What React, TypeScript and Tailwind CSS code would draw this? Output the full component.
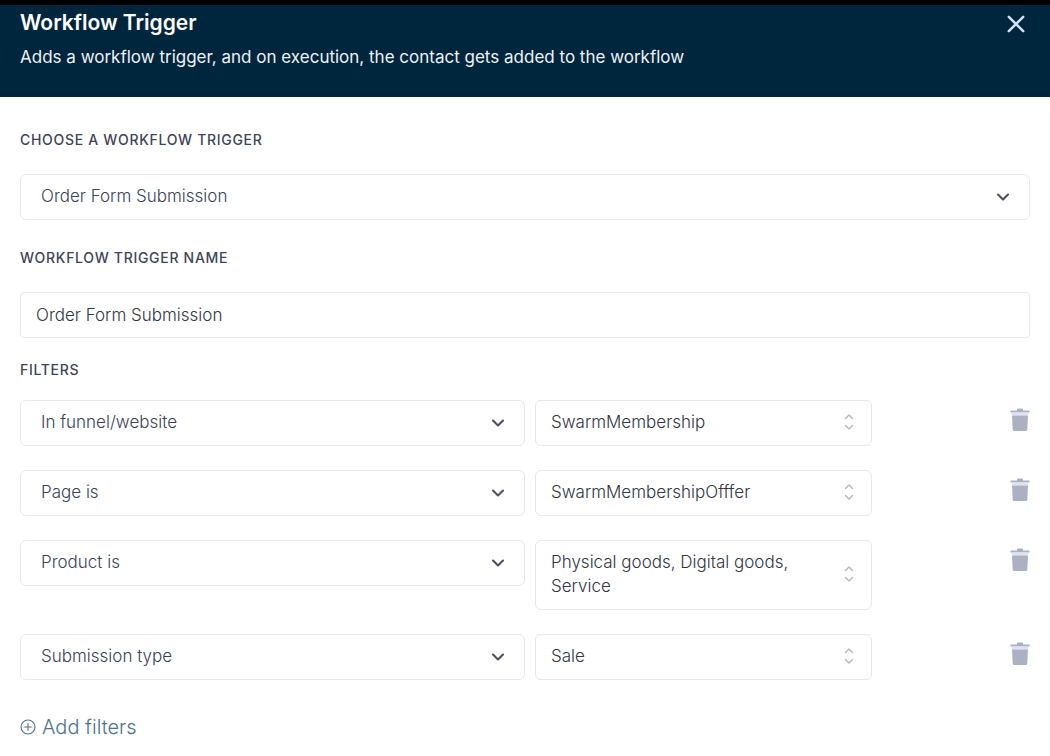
import React, { useState } from "react";

interface Filter {
  id: string;
  field: string;
  value: string;
}

const FIELDS = ["In funnel/website", "Page is", "Product is", "Submission type"];

const TRIGGERS = ["Order Form Submission"];

const INITIAL_FILTERS: Filter[] = [
  { id: "funnel", field: "In funnel/website", value: "SwarmMembership" },
  { id: "page", field: "Page is", value: "SwarmMembershipOfffer" },
  { id: "product", field: "Product is", value: "Physical goods, Digital goods, Service" },
  { id: "type", field: "Submission type", value: "Sale" },
];

function ChevronIcon() {
  return (
    <svg viewBox="0 0 14 10" className="w-3.5 h-2.5" fill="none" stroke="#4b4f5e" strokeWidth="2.1" strokeLinecap="round" strokeLinejoin="round">
      <path d="M2 2.5 7 7.5 12 2.5" />
    </svg>
  );
}

function SelectorIcon() {
  return (
    <svg viewBox="0 0 10 18" className="w-2.5 h-[18px]" fill="none" stroke="#b9babd" strokeWidth="1.5" strokeLinecap="round" strokeLinejoin="round">
      <path d="M1.5 5.5 5 2 8.5 5.5M1.5 12.5 5 16 8.5 12.5" />
    </svg>
  );
}

function TrashIcon() {
  return (
    <svg viewBox="0 0 20 24" className="w-5 h-6">
      <path d="M7 1.5Q7 .5 8 .5H12Q13 .5 13 1.500V2.500H19.500V4.500H.5V2.500H7Z" fill="#abb1c2" />
      <path d="M1.500 4.500H18.500L18.200 7.500H1.800Z" fill="#dfe2f0" />
      <path d="M2 7.500H18L17.300 21.500Q17.200 23 15.700 23H4.300Q2.800 23 2.700 21.500Z" fill="#abb1c2" />
    </svg>
  );
}

interface SelectProps {
  id?: string;
  label?: string;
  value: string;
  options: string[];
  onChange: (value: string) => void;
}

function Select({ id, label, value, options, onChange }: SelectProps) {
  return (
    <div className="grid items-center">
      <select
        id={id}
        aria-label={label}
        value={value}
        onChange={(e) => onChange(e.target.value)}
        className="col-start-1 row-start-1 w-full h-[46px] appearance-none rounded-md border border-[#e8e8ea] bg-white pl-5 pr-10 text-[17px] font-light text-[#3c4257]"
      >
        {options.map((option) => (
          <option key={option}>{option}</option>
        ))}
      </select>
      <span className="col-start-1 row-start-1 justify-self-end pr-5 pointer-events-none">
        <ChevronIcon />
      </span>
    </div>
  );
}

interface FilterRowProps {
  filter: Filter;
  onFieldChange: (field: string) => void;
  onDelete: () => void;
}

function FilterRow({ filter, onFieldChange, onDelete }: FilterRowProps) {
  return (
    <li className="flex items-start gap-2.5">
      <div className="w-1/2">
        <Select label="Filter field" value={filter.field} options={FIELDS} onChange={onFieldChange} />
      </div>
      <button
        type="button"
        aria-haspopup="listbox"
        className="w-1/3 flex items-center justify-between rounded-md border border-[#e8e8ea] pt-[9px] pb-[11px] pl-[15px] pr-[17px] text-left text-[17px] leading-6 font-light text-[#33363f]"
      >
        <span className="max-w-[256px]">{filter.value}</span>
        <SelectorIcon />
      </button>
      <button type="button" onClick={onDelete} aria-label="Delete filter" className="ml-auto mt-2">
        <TrashIcon />
      </button>
    </li>
  );
}

const labelClass = "block text-sm leading-5 font-medium tracking-wider uppercase text-[#3f4458]";

export default function App() {
  const [trigger, setTrigger] = useState(TRIGGERS[0]);
  const [name, setName] = useState("Order Form Submission");
  const [filters, setFilters] = useState(INITIAL_FILTERS);

  const handleFieldChange = (id: string, field: string) => {
    setFilters(filters.map((f) => (f.id === id ? { ...f, field } : f)));
  };

  const handleAdd = () => {
    setFilters([...filters, { id: String(Date.now()), field: FIELDS[0], value: "Select" }]);
  };

  return (
    <div className="min-h-screen bg-white font-['Inter',sans-serif]">
      <header className="flex items-start justify-between border-t-[5px] border-black bg-[#00263e] px-5 pt-1 pb-7">
        <div>
          <h1 className="text-[21px] leading-7 font-semibold text-white">Workflow Trigger</h1>
          <p className="mt-2 text-[17px] leading-6 text-[#eef2f5]">
            Adds a workflow trigger, and on execution, the contact gets added to the workflow
          </p>
        </div>
        <button type="button" aria-label="Close" className="px-1 py-[5px]">
          <svg viewBox="0 0 20 20" className="w-5 h-5" fill="none" stroke="#d3e2f8" strokeWidth="2.5" strokeLinecap="round">
            <path d="M2.800 2.800 17.200 17.200M17.200 2.800 2.800 17.200" />
          </svg>
        </button>
      </header>

      <main className="px-5 pt-[33px] pb-4">
        <label htmlFor="trigger" className={labelClass}>
          Choose a workflow trigger
        </label>
        <div className="mt-6">
          <Select id="trigger" value={trigger} options={TRIGGERS} onChange={setTrigger} />
        </div>

        <label htmlFor="trigger-name" className={`${labelClass} mt-7`}>
          Workflow trigger name
        </label>
        <input
          id="trigger-name"
          type="text"
          value={name}
          onChange={(e) => setName(e.target.value)}
          className="mt-6 block w-full h-[46px] rounded-sm border border-[#e8e8ea] px-[15px] text-[17px] font-light text-[#33363f]"
        />

        <h2 className={`${labelClass} mt-[22px]`}>Filters</h2>
        <ul className="mt-5 flex flex-col gap-6">
          {filters.map((filter) => (
            <FilterRow
              key={filter.id}
              filter={filter}
              onFieldChange={(field) => handleFieldChange(filter.id, field)}
              onDelete={() => setFilters(filters.filter((f) => f.id !== filter.id))}
            />
          ))}
        </ul>

        <button
          type="button"
          onClick={handleAdd}
          className="mt-[31px] flex items-center gap-1.5 text-xl leading-8 font-light text-[#4f7288]"
        >
          <svg viewBox="0 0 16 16" className="w-4 h-4" fill="none" stroke="currentColor" strokeWidth="1.1">
            <circle cx="8" cy="8" r="7" />
            <path d="M8 4.200V11.800M4.200 8H11.800" />
          </svg>
          Add filters
        </button>
      </main>
    </div>
  );
}
